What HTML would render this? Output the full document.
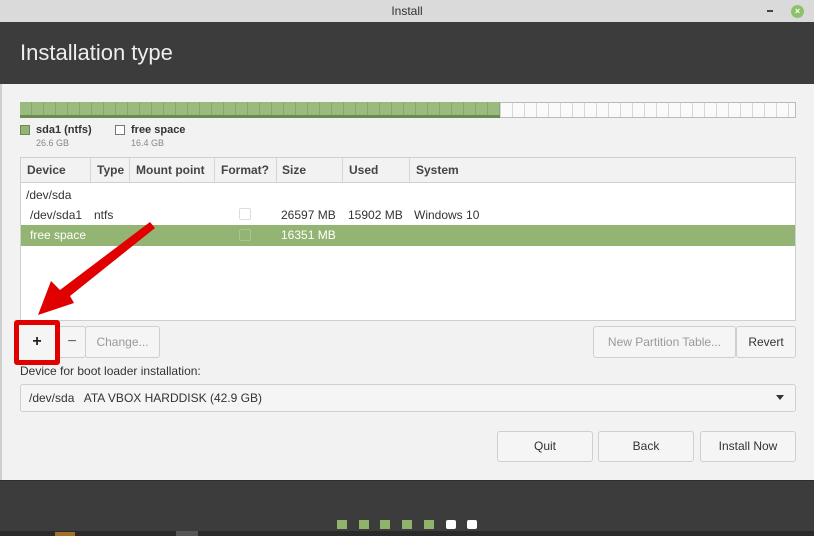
<!DOCTYPE html>
<html><head><style>
*{margin:0;padding:0;box-sizing:border-box}
body{width:814px;height:536px;overflow:hidden;background:#f2f2f2;font-family:"Liberation Sans",sans-serif;font-size:12px;color:#333;position:relative}
.a{position:absolute}
.btn{position:absolute;border:1px solid #cfcfcf;border-radius:3px;background:#f5f5f5;text-align:center;font-size:12px;color:#333}
th,td{text-align:left}
</style></head><body>
<div class="a" style="left:0;top:0;width:814px;height:22px;background:#dadada;text-align:center;line-height:23px;font-size:12px;color:#333">Install</div>
<div class="a" style="left:767px;top:10px;width:6px;height:2px;background:#444"></div>
<div class="a" style="left:791px;top:5px;width:13px;height:13px;border-radius:50%;background:#8fc16a;color:#fff;font-size:9px;line-height:13px;text-align:center;font-weight:bold">×</div>
<div class="a" style="left:0;top:22px;width:814px;height:62px;background:#3c3c3c"></div>
<div class="a" style="left:20px;top:40px;font-size:22px;color:#eee">Installation type</div>
<div class="a" style="left:0;top:84px;width:2px;height:396px;background:#cfcfcf"></div>
<div class="a" style="left:20px;top:102px;width:776px;height:16px;border:1px solid #bbb;background:repeating-linear-gradient(90deg,#fafafa 0 11px,#d6d6d6 11px 12px)"></div>
<div class="a" style="left:20px;top:102px;width:480px;height:16px;background:repeating-linear-gradient(90deg,#9aba7e 0 11px,#86a86a 11px 12px);border-bottom:3px solid #6b8b52"></div>
<div class="a" style="left:20px;top:125px;width:10px;height:10px;background:#94b474;border:1px solid #6b8b52"></div>
<div class="a" style="left:36px;top:124px;font-weight:bold;font-size:11px">sda1 (ntfs)</div>
<div class="a" style="left:36px;top:138px;font-size:9px;color:#888">26.6 GB</div>
<div class="a" style="left:115px;top:125px;width:10px;height:10px;background:#fff;border:1px solid #777"></div>
<div class="a" style="left:131px;top:124px;font-weight:bold;font-size:11px">free space</div>
<div class="a" style="left:131px;top:138px;font-size:9px;color:#888">16.4 GB</div>
<div class="a" style="left:20px;top:157px;width:776px;height:164px;background:#fff;border:1px solid #cfcfcf"></div>
<div class="a" style="left:21px;top:158px;width:774px;height:25px;background:#f2f2f2;border-bottom:1px solid #cfcfcf;font-weight:bold;font-size:12px;line-height:25px;color:#444">
<span class="a" style="left:6px">Device</span><span class="a" style="left:76px">Type</span><span class="a" style="left:115px">Mount point</span><span class="a" style="left:200px">Format?</span><span class="a" style="left:261px">Size</span><span class="a" style="left:328px">Used</span><span class="a" style="left:395px">System</span>
<span class="a" style="left:69px;top:0;width:1px;height:25px;background:#d5d5d5"></span><span class="a" style="left:108px;top:0;width:1px;height:25px;background:#d5d5d5"></span><span class="a" style="left:193px;top:0;width:1px;height:25px;background:#d5d5d5"></span><span class="a" style="left:255px;top:0;width:1px;height:25px;background:#d5d5d5"></span><span class="a" style="left:321px;top:0;width:1px;height:25px;background:#d5d5d5"></span><span class="a" style="left:388px;top:0;width:1px;height:25px;background:#d5d5d5"></span></div>
<div class="a" style="left:26px;top:188px">/dev/sda</div>
<div class="a" style="left:30px;top:208px">/dev/sda1</div><div class="a" style="left:94px;top:208px">ntfs</div>
<div class="a" style="left:239px;top:208px;width:12px;height:12px;border:1px solid #ddd;border-radius:2px"></div>
<div class="a" style="left:281px;top:208px">26597 MB</div><div class="a" style="left:348px;top:208px">15902 MB</div><div class="a" style="left:414px;top:208px">Windows 10</div>
<div class="a" style="left:21px;top:225px;width:774px;height:21px;background:#94b474;color:#fff;line-height:21px">
<span class="a" style="left:9px">free space</span><span class="a" style="left:218px;top:4px;width:12px;height:12px;border:1px solid #a9c48e;border-radius:2px"></span><span class="a" style="left:260px">16351 MB</span></div>
<div class="btn" style="left:58px;top:326px;width:28px;height:32px;line-height:30px;font-size:16px;color:#666">−</div>
<div class="btn" style="left:85px;top:326px;width:75px;height:32px;line-height:30px;color:#999">Change...</div>
<div class="a" style="left:14px;top:320px;width:46px;height:45px;border:5px solid #e00000;border-radius:3px;background:#f5f5f5;text-align:center;line-height:34px;font-size:16px;font-weight:bold;color:#222">+</div>
<div class="btn" style="left:593px;top:326px;width:143px;height:32px;line-height:30px;color:#999">New Partition Table...</div>
<div class="btn" style="left:736px;top:326px;width:60px;height:32px;line-height:30px">Revert</div>
<div class="a" style="left:20px;top:364px">Device for boot loader installation:</div>
<div class="btn" style="left:20px;top:384px;width:776px;height:28px;line-height:26px;text-align:left;padding-left:8px">/dev/sda &nbsp; ATA VBOX HARDDISK (42.9 GB)<span class="a" style="right:11px;top:10px;border-left:4px solid transparent;border-right:4px solid transparent;border-top:5px solid #333;width:0;height:0"></span></div>
<div class="btn" style="left:497px;top:431px;width:96px;height:31px;line-height:29px">Quit</div>
<div class="btn" style="left:598px;top:431px;width:96px;height:31px;line-height:29px">Back</div>
<div class="btn" style="left:700px;top:431px;width:96px;height:31px;line-height:29px">Install Now</div>
<div class="a" style="left:0;top:480px;width:814px;height:56px;background:#3c3c3c;border-top:1px solid #2e2e2e"></div>
<div class="a" style="left:337px;top:520px;width:10px;height:9px;background:#8fb36b"></div>
<div class="a" style="left:359px;top:520px;width:10px;height:9px;background:#8fb36b"></div>
<div class="a" style="left:380px;top:520px;width:10px;height:9px;background:#8fb36b"></div>
<div class="a" style="left:402px;top:520px;width:10px;height:9px;background:#8fb36b"></div>
<div class="a" style="left:424px;top:520px;width:10px;height:9px;background:#8fb36b"></div>
<div class="a" style="left:446px;top:520px;width:10px;height:9px;background:#fff;border-radius:2px"></div>
<div class="a" style="left:467px;top:520px;width:10px;height:9px;background:#fff;border-radius:2px"></div>
<div class="a" style="left:0;top:531px;width:814px;height:5px;background:#2a2a2a"></div>
<div class="a" style="left:176px;top:531px;width:22px;height:5px;background:#555"></div>
<div class="a" style="left:55px;top:532px;width:20px;height:4px;background:#a0702a"></div>
<svg class="a" style="left:0;top:0" width="814" height="536"><path d="M150 222 L155 228 L70 296 L74 303 L38 315 L51 281 L60 290 Z" fill="#e00000"/></svg>
</body></html>
